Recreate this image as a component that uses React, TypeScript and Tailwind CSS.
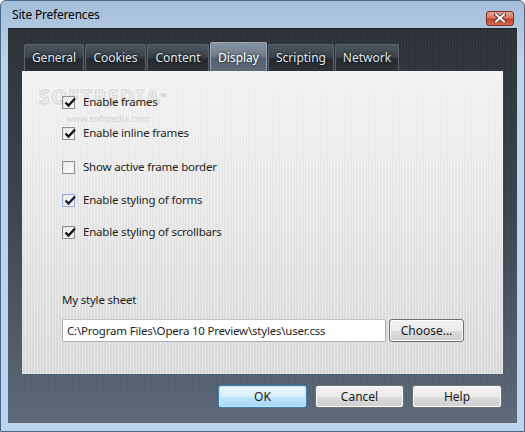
const tabs = [
  { label: 'General', w: 'w-[60px]' },
  { label: 'Cookies', w: 'w-[61px]' },
  { label: 'Content', w: 'w-[62px]' },
  { label: 'Display', w: 'w-[57px]', active: true },
  { label: 'Scripting', w: 'w-[66px]' },
  { label: 'Network', w: 'w-[64px]' },
];

const options = [
  { label: 'Enable frames', checked: true, mt: 'mt-[24px]' },
  { label: 'Enable inline frames', checked: true, mt: 'mt-[17px]' },
  { label: 'Show active frame border', checked: false, mt: 'mt-[20px]' },
  { label: 'Enable styling of forms', checked: true, mt: 'mt-[19px]', hover: true },
  { label: 'Enable styling of scrollbars', checked: true, mt: 'mt-[18px]' },
];

function CheckBox({ checked, hover }: { checked: boolean; hover?: boolean }) {
  return (
    <div
      className={`relative w-[13px] h-[13px] border ${
        hover ? 'border-[#9aaad8]' : 'border-[#8e8f8f]'
      } bg-[linear-gradient(135deg,#dcdcdc,#fdfdfd)] shrink-0`}
    >
      <div className="absolute inset-[1px] border border-[#f4f4f4] bg-[linear-gradient(135deg,#e6e6e6,#ffffff)]" />
      {checked && (
        <svg className="absolute left-[1px] top-[-1px]" width="13" height="13" viewBox="0 0 13 13">
          <path d="M1.5 6.5 L4.5 9.5 L11 2.5" fill="none" stroke={hover ? '#1a1a3a' : '#111'} strokeWidth="2.3" />
        </svg>
      )}
    </div>
  );
}

function VistaButton({ label, primary, w }: { label: string; primary?: boolean; w: string }) {
  return (
    <button
      className={`${w} h-[23px] rounded-[3px] border text-[12px] text-[#1a1a1a] ${
        primary
          ? 'border-[#3c7fb1] bg-[linear-gradient(to_bottom,#eaf6fd_0%,#d9f0fc_50%,#bee6fd_50%,#a7d9f5_100%)] shadow-[inset_0_0_0_1px_#c8e6f7]'
          : 'border-[#707070] bg-[linear-gradient(to_bottom,#f2f2f2_0%,#ebebeb_50%,#dddddd_50%,#cfcfcf_100%)] shadow-[inset_0_0_0_1px_#fcfcfc]'
      }`}
    >
      {label}
    </button>
  );
}

export default function App() {
  return (
    <div
      className="w-[525px] h-[432px] flex flex-col rounded-t-[6px] border border-[#4a6a8c] bg-[linear-gradient(to_bottom,#a4bdd9,#bcd3ec_60px,#bcd4ed)] overflow-hidden"
      style={{ fontFamily: '"Noto Sans", "Open Sans", sans-serif' }}
    >
      {/* Title bar */}
      <div className="h-[27px] flex items-center justify-between pl-[11px] pr-[10px]">
        <span className="text-[12px] text-black tracking-[-0.2px]">Site Preferences</span>
        <div className="relative w-[28px] h-[15px] mt-[7px] rounded-[3px] border border-[#7a2a22] bg-[linear-gradient(to_bottom,#e8a493_0%,#d47764_45%,#c4442b_55%,#d86c54_100%)] flex items-center justify-center">
          <svg width="12" height="10" viewBox="0 0 12 10">
            <path d="M2 1.5 L10 8.5 M10 1.5 L2 8.5" stroke="#4a2a24" strokeWidth="3.6" strokeLinecap="square" />
            <path d="M2 1.5 L10 8.5 M10 1.5 L2 8.5" stroke="#ffffff" strokeWidth="2" strokeLinecap="square" />
          </svg>
        </div>
      </div>

      {/* Client area */}
      <div className="mx-[7px] mb-[8px] flex-1 flex flex-col px-[14px] border-t border-[#20252b] bg-[image:repeating-linear-gradient(90deg,rgba(255,255,255,0.035)_0_1px,rgba(0,0,0,0)_1px_3px),linear-gradient(to_bottom,#2b3036,#3a424c_45%,#5a6878)]">
        {/* Tabs */}
        <div className="flex items-end gap-[1px] ml-[2px] mt-[13px] h-[29px]">
          {tabs.map((t) =>
            t.active ? (
              <div
                key={t.label}
                className={`${t.w} h-[29px] flex items-center justify-center pt-[2px] border border-b-0 border-[#9aa6b2] rounded-t-[2px] bg-[linear-gradient(to_bottom,#8896a4,#6e7c8a_45%,#56626f_55%,#5c6976)] text-[12px] text-white [text-shadow:0_0_3px_#1a2028]`}
              >
                {t.label}
              </div>
            ) : (
              <div
                key={t.label}
                className={`${t.w} h-[27px] flex items-center justify-center border border-b-0 border-[#59616b] rounded-t-[2px] bg-[linear-gradient(to_bottom,#4d555e,#3b424a_45%,#262b31_55%,#2c3238)] text-[12px] text-[#dfe6ee] [text-shadow:0_0_3px_#000]`}
              >
                {t.label}
              </div>
            )
          )}
        </div>

        {/* Panel */}
        <div className="relative h-[303px] flex flex-col pl-[40px] bg-[image:repeating-linear-gradient(90deg,rgba(255,255,255,0.35)_0_1px,rgba(0,0,0,0)_1px_3px),linear-gradient(to_bottom,#f1f1f1,#e2e2e2_60%,#d8d8d8)]">
          {/* watermark */}
          <div className="absolute left-[17px] top-[15px] text-[19px] leading-[22px] tracking-[2px] font-bold text-transparent [-webkit-text-stroke:1px_#d6d6d6] select-none">
            SOFTPEDIA<span className="text-[7px] align-top">™</span>
          </div>
          <div className="absolute left-[44px] top-[42px] text-[9px] leading-[11px] text-[#d4d4d4] select-none">www.softpedia.com</div>

          {options.map((o) => (
            <div key={o.label} className={`relative flex items-center gap-[8px] h-[14px] ${o.mt}`}>
              <CheckBox checked={o.checked} hover={o.hover} />
              <span className="text-[11.5px] tracking-[-0.2px] text-[#1e1e1e] leading-none">{o.label}</span>
            </div>
          ))}

          <div className="mt-[52px] text-[11.5px] tracking-[-0.2px] text-[#1e1e1e]">My style sheet</div>
          <div className="flex items-center gap-[3px] mt-[11px]">
            <div className="w-[324px] h-[23px] flex items-center px-[4px] border border-[#abadb3] border-t-[#bfc1c6] rounded-[2px] bg-white text-[11.5px] tracking-[-0.2px] text-[#1e1e1e]">
              C:\Program Files\Opera 10 Preview\styles\user.css
            </div>
            <VistaButton label="Choose..." w="w-[75px]" />
          </div>
        </div>

        {/* Bottom buttons */}
        <div className="flex justify-end gap-[8px] mt-[11px] mr-[1px]">
          <VistaButton label="OK" primary w="w-[89px]" />
          <VistaButton label="Cancel" w="w-[89px]" />
          <VistaButton label="Help" w="w-[90px]" />
        </div>
      </div>
    </div>
  );
}
